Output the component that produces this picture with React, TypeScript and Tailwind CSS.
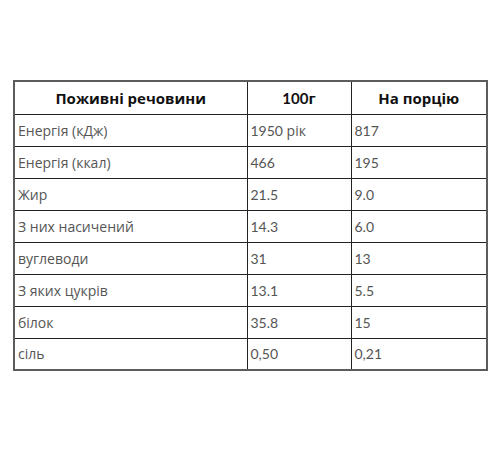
import React from 'react';

const rows: [string, string, string][] = [
  ['Енергія (кДж)', '1950 рік', '817'],
  ['Енергія (ккал)', '466', '195'],
  ['Жир', '21.5', '9.0'],
  ['З них насичений', '14.3', '6.0'],
  ['вуглеводи', '31', '13'],
  ['З яких цукрів', '13.1', '5.5'],
  ['білок', '35.8', '15'],
  ['сіль', '0,50', '0,21'],
];

// digits render in Lato, letters in Open Sans (as in the source page)
function Mixed({ text }: { text: string }) {
  const parts = text.match(/[0-9.,]+|[^0-9.,]+/g) || [];
  return (
    <>
      {parts.map((p, i) =>
        /^[0-9.,]+$/.test(p) ? (
          <span key={i} className="font-['Lato',sans-serif]">{p}</span>
        ) : (
          <span key={i} className="font-['Open_Sans',sans-serif]">{p}</span>
        )
      )}
    </>
  );
}

export default function App() {
  return (
    <div className="w-[500px] h-[450px] bg-white pt-[80px] pl-[13px] font-['Open_Sans',sans-serif]">
      <table className="border-collapse border-2 border-[#5c5c5c] w-[473px] table-fixed">
        <colgroup>
          <col className="w-[233px]" />
          <col className="w-[104px]" />
          <col className="w-[136px]" />
        </colgroup>
        <thead>
          <tr className="h-[33px]">
            {['Поживні речовини', '100г', 'На порцію'].map((h) => (
              <th key={h} className="border border-[#222] text-center text-[15px] font-bold text-[#111] px-1">
                <Mixed text={h} />
              </th>
            ))}
          </tr>
        </thead>
        <tbody>
          {rows.map((r) => (
            <tr key={r[0]} className="h-[32px]">
              {r.map((c, i) => (
                <td key={i} className="border border-[#222] text-left text-[14px] text-[#555] pl-[3px] pr-1">
                  <Mixed text={c} />
                </td>
              ))}
            </tr>
          ))}
        </tbody>
      </table>
    </div>
  );
}
